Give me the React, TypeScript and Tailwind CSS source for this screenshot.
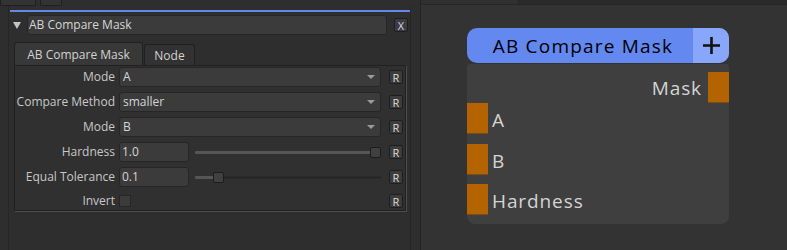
import React from 'react';

const ROWS = [
  { label: 'Mode', kind: 'combo', value: 'A' },
  { label: 'Compare Method', kind: 'combo', value: 'smaller' },
  { label: 'Mode', kind: 'combo', value: 'B' },
  { label: 'Hardness', kind: 'slider', value: '1.0', pos: 1 },
  { label: 'Equal Tolerance', kind: 'slider', value: '0.1', pos: 0.1 },
  { label: 'Invert', kind: 'check', value: '' },
];

function ResetButton() {
  return (
    <div className="w-[14px] h-[14px] shrink-0 rounded-[2px] bg-[#3c3c3c] border border-[#1e1e1e] flex items-center justify-center text-[11px] leading-none text-[#dcdcdc]">
      R
    </div>
  );
}

function Param({ row }: { row: (typeof ROWS)[number] }) {
  return (
    <div className="flex items-center h-[20px]">
      <div className="w-[104px] pr-[4px] text-right text-[12px] text-[#c8c8c8] whitespace-nowrap">{row.label}</div>
      <div className="w-[270px] flex items-center">
        {row.kind === 'combo' && (
          <div className="w-[262px] h-[20px] rounded-[3px] bg-[#3b3b3b] border border-[#262626] flex items-center justify-between pl-[3px] pr-[5px] text-[12px] text-[#d6d6d6]">
            <span>{row.value}</span>
            <span className="w-0 h-0 border-l-[4px] border-r-[4px] border-t-[4px] border-l-transparent border-r-transparent border-t-[#9a9a9a]" />
          </div>
        )}
        {row.kind === 'slider' && (
          <>
            <div className="w-[70px] h-[20px] rounded-[3px] bg-[#3b3b3b] border border-[#262626] flex items-center pl-[2px] text-[12px] text-[#d6d6d6]">
              {row.value}
            </div>
            <div className="ml-[6px] w-[186px] h-[11px] flex items-center">
              <div
                className="h-[3px] bg-[#565656] rounded-l-[1px]"
                style={{ width: `${(row.pos ?? 0) * 175}px` }}
              />
              <div className="w-[11px] h-[11px] shrink-0 rounded-[2px] bg-[#404040] border border-[#1c1c1c]" />
              <div className="flex-1 h-[3px] bg-[#252525] border-y border-[#2a2a2a]" />
            </div>
          </>
        )}
        {row.kind === 'check' && (
          <div className="w-[12px] h-[12px] bg-[#3b3b3b] border border-[#262626]" />
        )}
      </div>
      <ResetButton />
    </div>
  );
}

function Port() {
  return <div className="w-[21px] h-[31px] shrink-0 bg-[#b36300] border-b border-[#7d4a10]" />;
}

export default function App() {
  return (
    <div className="w-[787px] h-[250px] flex bg-[#2f2f2f] overflow-hidden font-['Open_Sans',sans-serif]">
      {/* Properties panel */}
      <div className="w-[421px] h-full shrink-0 border-r border-[#242424] bg-[#2e2e2e] flex flex-col">
        <div className="flex gap-[4px] h-[6px]">
          <div className="w-[36px] h-[6px] rounded-b-[2px] bg-[#333] border border-t-0 border-[#1f1f1f]" />
          <div className="w-[22px] h-[6px] rounded-b-[2px] bg-[#333] border border-t-0 border-[#1f1f1f]" />
        </div>
        <div className="ml-[8px] w-[403px] flex-1 border-l border-r border-[#262626] flex flex-col">
          <div className="mt-[4px] ml-[1px] h-[2px] bg-[#6586ea]" />
          {/* name row */}
          <div className="mt-[3px] flex items-center h-[20px]">
            <span className="ml-[4px] w-0 h-0 border-l-[4px] border-r-[4px] border-t-[7px] border-l-transparent border-r-transparent border-t-[#c4c4c4]" />
            <div className="ml-[6px] w-[360px] h-[20px] rounded-[3px] bg-[#3b3b3b] border border-[#262626] flex items-center pl-[1px] text-[12px] text-[#d6d6d6]">
              AB Compare Mask
            </div>
            <div className="ml-[7px] w-[14px] h-[14px] rounded-[2px] bg-[#3c3c3c] border border-[#1e1e1e] flex items-center justify-center text-[11px] leading-none text-[#cfd6ff]">
              X
            </div>
          </div>
          {/* tabs */}
          <div className="mt-[7px] ml-[5px] flex items-end">
            <div className="w-[129px] h-[24px] rounded-t-[3px] bg-[#383838] border border-b-0 border-[#202020] flex items-center justify-center text-[12px] text-[#d2d2d2]">
              AB Compare Mask
            </div>
            <div className="ml-[1px] w-[51px] h-[22px] rounded-t-[3px] bg-[#323232] border border-b-0 border-[#202020] flex items-center justify-center text-[12px] text-[#d2d2d2]">
              Node
            </div>
          </div>
          <div className="ml-[5px] w-[392px] h-[146px] -mt-[1px] bg-[#303030] border border-[#202020] shadow-[1px_1px_0_#4e4e4e] pt-[1px] flex flex-col gap-[5px]">
            {ROWS.map((r, i) => (
              <Param key={i} row={r} />
            ))}
          </div>
        </div>
      </div>

      {/* Node graph */}
      <div className="flex-1 h-full bg-[#333333] relative">
        <div className="h-[5px] flex border-b border-[#262626]">
          <div className="w-[98px] bg-[#303030] border-r border-[#262626]" />
          <div className="flex-1 bg-[#2a2a2a]" />
        </div>
        <div className="absolute left-[46px] top-[28px] w-[262px]">
          <div className="h-[35px] rounded-[10px] bg-[#6389f0] flex items-center overflow-hidden">
            <div className="flex-1 text-center text-[19px] text-black tracking-[1.2px] pl-[6px] pt-[1px]">AB Compare Mask</div>
            <div className="w-[36px] h-full bg-[#89a7fa] flex items-center justify-center">
              <svg width="19" height="19" viewBox="0 0 19 19">
                <path d="M9.5 1v17M1 9.5h17" stroke="#111" strokeWidth="2.6" />
              </svg>
            </div>
          </div>
          <div className="mt-[1px] h-[160px] rounded-t-[3px] rounded-b-[8px] bg-[#3f3f3f] pt-[8px] flex flex-col text-[19px] text-[#d4d4d4] tracking-[0.9px]">
            <div className="flex items-center justify-end gap-[6px]">
              <span className="pt-[2px]">Mask</span>
              <Port />
            </div>
            {['A', 'B', 'Hardness'].map((n, i) => (
              <div key={n} className={`flex items-center gap-[4px] ${i === 0 ? '' : 'mt-[9px]'}`}>
                <Port />
                <span className="pt-[3px]">{n}</span>
              </div>
            ))}
          </div>
        </div>
      </div>
    </div>
  );
}
